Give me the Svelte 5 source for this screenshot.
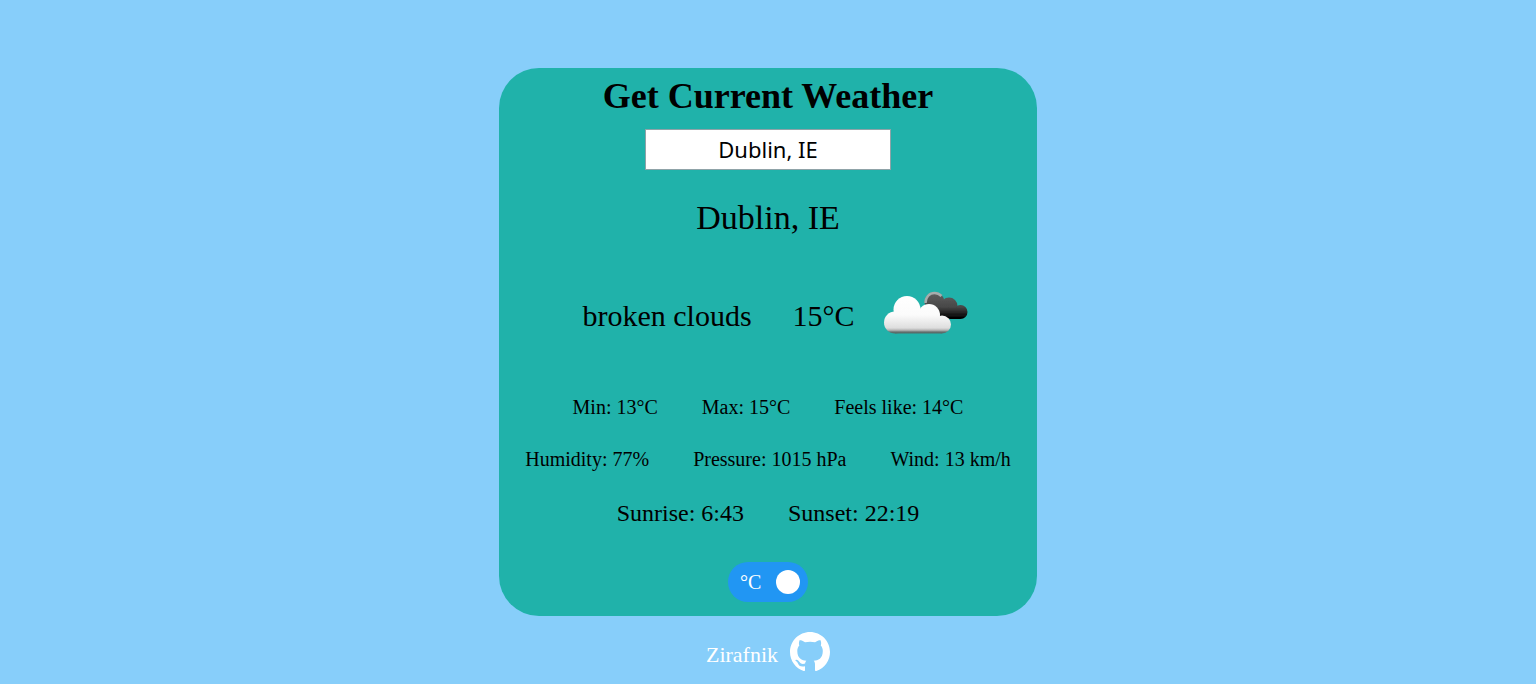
<script>
  let query = $state('Dublin, IE');
  let metric = $state(true);

  const weather = {
    city: 'Dublin, IE',
    description: 'broken clouds',
    temp: 15,
    min: 13,
    max: 15,
    feels: 14,
    humidity: 77,
    pressure: 1015,
    wind: 13,
    sunrise: '6:43',
    sunset: '22:19'
  };

  let unit = $derived(metric ? '°C' : '°F');

  function degrees(celsius) {
    return metric ? celsius : Math.round((celsius * 9) / 5 + 32);
  }
</script>

<main>
  <section class="card">
    <h1>Get Current Weather</h1>
    <input class="search" type="text" aria-label="City" bind:value={query} />
    <h2>{weather.city}</h2>

    <div class="current">
      <span>{weather.description}</span>
      <span>{degrees(weather.temp)}{unit}</span>
      <svg class="clouds" viewBox="0 0 86 46" role="img" aria-label="broken clouds">
        <defs>
          <linearGradient id="dark" gradientUnits="userSpaceOnUse" x1="0" y1="2" x2="0" y2="29">
            <stop offset="0" stop-color="#606060" />
            <stop offset="0.55" stop-color="#484848" />
            <stop offset="0.95" stop-color="#050505" />
          </linearGradient>
          <linearGradient id="light" gradientUnits="userSpaceOnUse" x1="0" y1="6" x2="0" y2="44">
            <stop offset="0" stop-color="#ffffff" />
            <stop offset="0.5" stop-color="#fbfbfb" />
            <stop offset="0.84" stop-color="#dedede" />
            <stop offset="0.9" stop-color="#b5b5b5" />
            <stop offset="0.95" stop-color="#606d6c" />
            <stop offset="1" stop-color="#536a68" />
          </linearGradient>
          <filter id="soft" x="-5%" y="-5%" width="110%" height="110%">
            <feGaussianBlur stdDeviation="0.7" />
          </filter>
        </defs>
        <g filter="url(#soft)">
          <g fill="url(#dark)">
            <circle cx="51.5" cy="12" r="10" />
            <circle cx="66" cy="16" r="8.5" />
            <circle cx="77.5" cy="22" r="7" />
            <path d="M46 12h20l11 8v9H50z" />
          </g>
          <path fill="none" stroke="#a7adad" stroke-width="2.5" d="M42.500 13c0-6 4-10 9-10 3 0 5 1 7 3" />
          <g fill="url(#light)">
            <circle cx="24" cy="19.500" r="13.500" />
            <circle cx="12" cy="32.500" r="11" />
            <circle cx="46" cy="25" r="11" />
            <circle cx="59" cy="34.500" r="9" />
            <path d="M12 30L24 19l22 4 11 11 2 9.500H12z" />
          </g>
        </g>
      </svg>
    </div>

    <div class="details">
      <span>Min: {degrees(weather.min)}{unit}</span>
      <span>Max: {degrees(weather.max)}{unit}</span>
      <span>Feels like: {degrees(weather.feels)}{unit}</span>
    </div>
    <div class="details">
      <span>Humidity: {weather.humidity}%</span>
      <span>Pressure: {weather.pressure} hPa</span>
      <span>Wind: {weather.wind} km/h</span>
    </div>
    <div class="details sun">
      <span>Sunrise: {weather.sunrise}</span>
      <span>Sunset: {weather.sunset}</span>
    </div>

    <label class="switch" class:off={!metric}>
      <input type="checkbox" bind:checked={metric} />
      <span>{unit}</span>
      <i class="knob"></i>
    </label>
  </section>

  <footer>
    <a href="https://github.com/Zirafnik">
      <span>Zirafnik</span>
      <svg viewBox="0 0 16 16" aria-hidden="true">
        <path fill="#fff" d="M8 0C3.58 0 0 3.58 0 8c0 3.54 2.29 6.53 5.47 7.59.4.07.55-.17.55-.38 0-.19-.01-.82-.01-1.49-2.01.37-2.53-.49-2.69-.94-.09-.23-.48-.94-.82-1.13-.28-.15-.68-.52-.01-.53.63-.01 1.08.58 1.23.82.72 1.21 1.87.87 2.33.66.07-.52.28-.87.51-1.07-1.78-.2-3.64-.89-3.64-3.95 0-.87.31-1.59.82-2.15-.08-.2-.36-1.02.08-2.12 0 0 .67-.21 2.2.82.64-.18 1.32-.27 2-.27s1.36.09 2 .27c1.53-1.04 2.2-.82 2.2-.82.44 1.1.16 1.92.08 2.12.51.56.82 1.27.82 2.15 0 3.07-1.87 3.75-3.65 3.95.29.25.54.73.54 1.48 0 1.07-.01 1.93-.01 2.2 0 .21.15.46.55.38A8.01 8.01 0 0 0 16 8c0-4.42-3.58-8-8-8z" />
      </svg>
    </a>
  </footer>
</main>

<style>
  :global(body) {
    margin: 0;
    background: #87cefa;
  }

  main {
    display: flex;
    flex-direction: column;
    align-items: center;
    padding-top: 68px;
    font-family: 'Liberation Serif', 'Times New Roman', serif;
    color: #000;
  }

  .card {
    box-sizing: border-box;
    display: flex;
    flex-direction: column;
    align-items: center;
    width: 35%;
    min-width: 520px;
    padding: 8px 0 14px;
    border-radius: 40px;
    background: #20b2aa;
  }

  h1 {
    margin: 0 0 12px;
    font-size: 36px;
    line-height: 41px;
  }

  .search {
    box-sizing: border-box;
    width: 246px;
    height: 41px;
    padding: 0 0 2px;
    border: 1px solid #8fa3a8;
    background: #fff;
    color: #000;
    font-family: 'Noto Sans', sans-serif;
    font-size: 22px;
    text-align: center;
  }

  h2 {
    margin: 28px 0 0;
    font-size: 34px;
    font-weight: 400;
    line-height: 40px;
  }

  .current {
    display: flex;
    align-items: center;
    gap: 41px;
    height: 100px;
    margin: 28px 0 29px;
    padding-left: 15px;
    font-size: 30px;
  }

  .clouds {
    width: 86px;
    height: 46px;
    margin: 0 0 6px -13px;
  }

  .details {
    display: flex;
    gap: 44px;
    margin-bottom: 28px;
    font-size: 20px;
    line-height: 24px;
  }

  .sun {
    font-size: 24px;
    line-height: 28px;
    margin-bottom: 35px;
  }

  .switch {
    position: relative;
    box-sizing: border-box;
    display: flex;
    align-items: center;
    justify-content: space-between;
    width: 80px;
    height: 40px;
    padding: 0 8px 0 12px;
    border-radius: 20px;
    background: #2196f3;
    color: #fff;
    font-size: 20px;
    cursor: pointer;
  }

  .switch input {
    position: absolute;
    inset: 0;
    width: 100%;
    height: 100%;
    margin: 0;
    opacity: 0;
    cursor: pointer;
  }

  .off {
    flex-direction: row-reverse;
    padding: 0 12px 0 8px;
  }

  .knob {
    width: 24px;
    height: 24px;
    border-radius: 50%;
    background: #fff;
  }

  footer {
    padding-top: 16px;
  }

  footer a {
    display: flex;
    align-items: center;
    gap: 12px;
    color: #fff;
    font-size: 22px;
    line-height: 26px;
    text-decoration: none;
  }

  footer span {
    padding-top: 6px;
  }

  footer svg {
    width: 40px;
    height: 40px;
  }
</style>
